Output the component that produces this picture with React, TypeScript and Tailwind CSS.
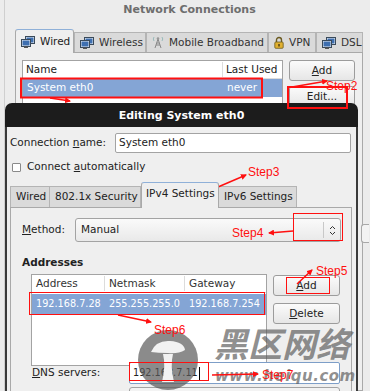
import React from "react";

const Monitor = () => (
  <svg width="14" height="12" viewBox="0 0 14 12" className="shrink-0">
    <rect x="4.5" y="0.5" width="9" height="7" fill="#e8eef5" stroke="#3a4a5a" />
    <rect x="5.5" y="1.5" width="7" height="5" fill="#3e6fb0" />
    <rect x="0.5" y="3.5" width="9" height="7" fill="#e8eef5" stroke="#3a4a5a" />
    <rect x="1.5" y="4.5" width="7" height="5" fill="#3e6fb0" />
    <rect x="3" y="10.5" width="4" height="1.5" fill="#555" />
  </svg>
);

const Antenna = () => (
  <svg width="12" height="13" viewBox="0 0 12 13" className="shrink-0">
    <path d="M6 3 L3 12 M6 3 L9 12 M4 9 L8 9 M4.6 7 L7.4 7" stroke="#888" strokeWidth="1" fill="none" />
    <path d="M2 1 Q0.5 3 2 5 M10 1 Q11.5 3 10 5" stroke="#9bb" strokeWidth="1" fill="none" />
    <circle cx="6" cy="2.5" r="1.3" fill="#999" />
  </svg>
);

const Lock = () => (
  <svg width="10" height="13" viewBox="0 0 10 13" className="shrink-0">
    <path d="M2.5 6 V4 a2.5 2.5 0 0 1 5 0 V6" stroke="#6b5a20" strokeWidth="1.4" fill="none" />
    <rect x="0.8" y="6" width="8.4" height="6.3" rx="1" fill="#e0b030" stroke="#6b5a20" strokeWidth="0.8" />
    <rect x="4.3" y="8" width="1.4" height="2.5" fill="#4a3a10" />
  </svg>
);

const OuterTab = ({ w, icon, label, active }: { w: number; icon: React.ReactNode; label: string; active?: boolean }) => (
  <div
    style={{ width: w }}
    className={
      active
        ? "h-[24px] -mb-px z-10 flex items-center gap-[5px] pl-[5px] rounded-t-[3px] border border-[#a9a9a9] border-b-0 border-t-[#8fb0d8] bg-[#efefef]"
        : "h-[20px] flex items-center gap-[5px] pl-[5px] border border-[#b4b4b4] border-b-0 bg-[#dadada] text-[#333]"
    }
  >
    {icon}
    <span>{label}</span>
  </div>
);

const Btn = ({ children, cls }: { children: React.ReactNode; cls: string }) => (
  <div
    className={
      "flex items-center justify-center rounded-[3px] border border-[#9c9c9c] bg-gradient-to-b from-[#fbfbfb] to-[#e6e6e6] " + cls
    }
  >
    {children}
  </div>
);

export default function App() {
  return (
    <div
      className="relative w-[370px] h-[391px] overflow-hidden bg-[#ececec] text-[10.5px] text-[#222]"
      style={{ fontFamily: '"DejaVu Sans", sans-serif' }}
    >
      {/* Outer window */}
      <div className="flex flex-col h-full ml-[4px] border-l border-[#cfcfcf]">
        <div className="h-[29px] flex items-start justify-center pt-[2px] pl-[4px] font-bold text-[#6e6e6e] text-[11px]">
          Network Connections
        </div>
        <div className="flex items-end h-[23px] pl-[10px]">
          <OuterTab w={59} icon={<Monitor />} label="Wired" active />
          <OuterTab w={72} icon={<Monitor />} label="Wireless" />
          <OuterTab w={122} icon={<Antenna />} label="Mobile Broadband" />
          <OuterTab w={48} icon={<Lock />} label="VPN" />
          <OuterTab w={47} icon={<Monitor />} label="DSL" />
        </div>
        <div className="ml-[10px] w-[348px] flex-1 border border-[#a9a9a9] bg-[#efefef] flex gap-[6px] pl-[6px] pt-[7px]">
          <div className="w-[261px] h-[120px] border border-[#a3a3a3] bg-white flex flex-col">
            <div className="h-[18px] flex items-center border-b border-[#dcdcdc]">
              <div className="w-[200px] pl-[3px] border-r border-[#dcdcdc]">Name</div>
              <div className="pl-[3px]">Last Used</div>
            </div>
            <div className="h-[18px] flex items-center bg-[#84a5d5] text-white">
              <div className="w-[200px] pl-[4px]">System eth0</div>
              <div className="pl-[4px]">never</div>
            </div>
          </div>
          <div className="flex flex-col gap-[5px]">
            <Btn cls="w-[66px] h-[21px]">
              <span><u>A</u>dd</span>
            </Btn>
            <Btn cls="w-[66px] h-[21px]">
              <span>Edit...</span>
            </Btn>
          </div>
        </div>
      </div>

      {/* Editing dialog (window on top) */}
      <div className="absolute left-[5px] top-[103px] w-[353px] h-[300px] flex flex-col">
        <div className="h-[24px] shrink-0 rounded-t-[7px] bg-[#1c1c1c] flex items-center justify-center text-white font-bold text-[11px] pt-[2px]">
          Editing System eth0
        </div>
        <div className="flex-1 bg-[#efefef] border-x-2 border-[#3a3a3a] flex flex-col pl-[3px]">
          <div className="mt-[6px] flex items-center h-[20px]">
            <div className="w-[105px]">
              Connection <u>n</u>ame:
            </div>
            <div className="w-[236px] h-[20px] border border-[#a3a3a3] rounded-[2px] bg-white flex items-center pl-[3px]">
              System eth0
            </div>
          </div>
          <div className="mt-[7px] h-[14px] flex items-center gap-[6px] pl-[2px]">
            <div className="w-[9px] h-[9px] border border-[#8a8a8a] bg-white rounded-[1px]" />
            <span>
              Connect <u>a</u>utomatically
            </span>
          </div>
          <div className="mt-[7px] flex items-end h-[26px]">
            <div className="w-[40px] h-[21px] flex items-center pl-[5px] border border-[#b4b4b4] border-b-0 bg-[#dadada]">Wired</div>
            <div className="w-[91px] h-[21px] flex items-center pl-[5px] border border-[#b4b4b4] border-b-0 border-l-0 bg-[#dadada]">802.1x Security</div>
            <div className="w-[78px] h-[26px] -mb-px z-10 flex items-center pl-[4px] pb-[3px] rounded-t-[3px] border border-[#a9a9a9] border-b-0 border-t-[#8fb0d8] bg-[#efefef]">IPv4 Settings</div>
            <div className="w-[78px] h-[21px] flex items-center pl-[5px] border border-[#b4b4b4] border-b-0 border-l-0 bg-[#dadada]">IPv6 Settings</div>
          </div>
          <div className="w-[342px] flex-1 border border-[#a9a9a9] bg-[#efefef] flex flex-col pl-[11px]">
            <div className="mt-[10px] flex items-center h-[24px]">
              <div className="w-[53px]">
                <u>M</u>ethod:
              </div>
              <div className="w-[266px] h-[24px] rounded-[3px] border border-[#a3a3a3] bg-gradient-to-b from-[#fafafa] to-[#e9e9e9] flex items-center pl-[5px]">
                <span className="flex-1">Manual</span>
                <div className="h-[16px] border-l border-[#c8c8c8] w-[17px] flex items-center justify-center">
                  <svg width="7" height="11" viewBox="0 0 7 11">
                    <path d="M1 4 L3.5 1.5 L6 4 M1 7 L3.5 9.5 L6 7" stroke="#333" strokeWidth="1" fill="none" />
                  </svg>
                </div>
              </div>
            </div>
            <div className="mt-[13px] font-bold h-[14px] leading-[14px]">Addresses</div>
            <div className="mt-[5px] flex gap-[6px] pl-[9px]">
              <div className="w-[236px] h-[92px] border border-[#a3a3a3] bg-white flex flex-col">
                <div className="h-[18px] flex items-center border-b border-[#dcdcdc] text-[#333]">
                  <div className="w-[73px] pl-[4px] border-r border-[#dcdcdc]">Address</div>
                  <div className="w-[80px] pl-[4px] border-r border-[#dcdcdc]">Netmask</div>
                  <div className="pl-[4px]">Gateway</div>
                </div>
                <div className="mt-[1px] h-[21px] flex items-center bg-[#84a5d5] text-white text-[9.7px]">
                  <div className="w-[73px] pl-[4px]">192.168.7.28</div>
                  <div className="w-[80px] pl-[4px]">255.255.255.0</div>
                  <div className="pl-[4px]">192.168.7.254</div>
                </div>
              </div>
              <div className="flex flex-col gap-[7px] pt-[1px]">
                <Btn cls="w-[67px] h-[21px]">
                  <span><u>A</u>dd</span>
                </Btn>
                <Btn cls="w-[67px] h-[21px]">
                  <span><u>D</u>elete</span>
                </Btn>
              </div>
            </div>
            <div className="mt-[-4px] flex items-center h-[22px] pl-[10px]">
              <div className="w-[97px]">
                <u>D</u>NS servers:
              </div>
              <div className="w-[211px] h-[22px] border border-[#7d9ec8] rounded-[2px] bg-white flex items-center pl-[3px] text-[9.7px]">
                192.168.7.11<span className="w-px h-[13px] bg-black ml-[1px]" />
              </div>
            </div>
            <div className="mt-[3px] ml-[107px] w-[211px] h-[20px] border border-[#a3a3a3] rounded-[3px] bg-[#f3f3f3]" />
          </div>
        </div>
      </div>

      {/* Right-edge partial outer elements */}
      <div className="absolute left-[361px] top-[224px] w-[8px] h-[19px] rounded-l-[3px] border border-r-0 border-[#a8a8a8] bg-[#f3f3f3]" />

      {/* Watermark */}
      <div className="absolute left-[138px] top-[330px] w-[60px] h-[60px] rounded-full bg-[#5a5a5a]/70 flex items-start justify-center pt-[8px]">
        <svg width="40" height="46" viewBox="0 0 40 46">
          <path d="M3 14 Q8 2 22 3 Q36 4 37 12 Q30 16 20 15 Q10 15 3 14 Z" fill="#f2f2f2" />
          <path d="M15 16 Q18 28 14 44 L26 44 Q22 28 25 16 Z" fill="#f2f2f2" />
        </svg>
      </div>
      <div
        className="absolute left-[214px] top-[322px] text-[34px] leading-[42px] font-bold italic text-[#5e5e5e]/70"
        style={{ fontFamily: '"Noto Sans CJK SC", sans-serif' }}
      >
        黑区网络
      </div>
      <div
        className="absolute left-[215px] top-[366px] text-[15px] leading-[20px] font-bold italic text-[#5e5e5e]/70 tracking-[0.5px]"
        style={{ fontFamily: '"DejaVu Sans", sans-serif' }}
      >
        www.heiqu.com
      </div>

      {/* Annotations */}
      <svg className="absolute inset-0 pointer-events-none" width="370" height="391" viewBox="0 0 370 391">
        <defs>
          <marker id="ah" markerWidth="6" markerHeight="6" refX="5" refY="3" orient="auto" markerUnits="userSpaceOnUse">
            <path d="M0 0 L6 3 L0 6 Z" fill="#ff1010" />
          </marker>
        </defs>
        <g fill="none" stroke="#ff1010">
          <rect x="21" y="78.5" width="241" height="19" strokeWidth="2" />
          <rect x="288" y="87" width="59" height="21" strokeWidth="2" />
          <rect x="143.5" y="187.5" width="73" height="20" strokeWidth="1" />
          <rect x="293.5" y="213.5" width="49" height="27" strokeWidth="1" />
          <rect x="286.5" y="277.5" width="43" height="16" strokeWidth="1" />
          <rect x="29.5" y="292.5" width="235" height="22" strokeWidth="1" />
          <rect x="129.5" y="362.5" width="79" height="18" strokeWidth="1" />
        </g>
        <g stroke="#ff1010" strokeWidth="1.5" markerEnd="url(#ah)">
          <line x1="50" y1="98" x2="70" y2="101" />
          <line x1="292" y1="87" x2="327" y2="81" />
          <line x1="218" y1="187" x2="246" y2="175" />
          <line x1="293" y1="231" x2="269" y2="233" />
          <line x1="297" y1="284" x2="312" y2="270" />
          <line x1="118" y1="315" x2="151" y2="322" />
          <line x1="212" y1="375" x2="258" y2="374" />
        </g>
        <g fill="#ff1010" fontSize="12" style={{ fontFamily: '"Liberation Sans", sans-serif' }}>
          <text x="326" y="90">Step2</text>
          <text x="248" y="176">Step3</text>
          <text x="232" y="237">Step4</text>
          <text x="316" y="275">Step5</text>
          <text x="154" y="334">Step6</text>
          <text x="262" y="379">Step7</text>
        </g>
      </svg>
    </div>
  );
}
